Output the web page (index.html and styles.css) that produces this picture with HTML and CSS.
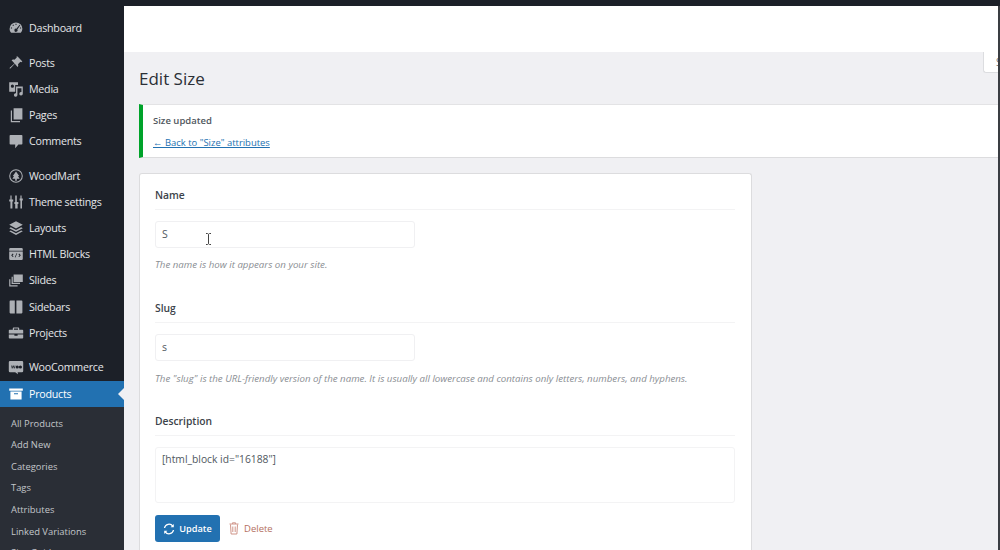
FILE: index.html
```html
<!DOCTYPE html>
<html lang="en">
<head>
<meta charset="utf-8">
<title>Edit Size</title>
<link rel="stylesheet" href="styles.css">
</head>
<body>
<div class="topbar"></div>
<div class="shell">
  <nav class="sidebar">
    <ul class="menu first">
      <li class="item"><svg class="ico" viewBox="0 0 20 20"><path d="M10 3a8 8 0 0 0-8 8c0 2 .7 3.800 2 5h12a8 8 0 0 0 2-5 8 8 0 0 0-8-8zM6.500 5.500l1 1-1 1-1-1zM10 4.300l1 .9-1 1-1-1zM4.300 9l1 1-1 1-1-1zM14.500 6l.8.6-3.600 5.200a2 2 0 1 1-1.200-.9zM15.700 9l1 1-1 1-1-1z" fill-rule="evenodd"/></svg><span>Dashboard</span></li>
    </ul>
    <ul class="menu">
      <li class="item"><svg class="ico" viewBox="0 0 20 20"><path d="M12 2l6 6-1.500 1-1-.5-3 3c.5 1.500.3 2.800-.5 3.500L8.500 11 3 17l-1-.2.200-1 6-5.300L4.500 6.500c.8-.8 2-1 3.500-.5l3-3-.5-1z"/></svg><span>Posts</span></li>
      <li class="item"><svg class="ico" viewBox="0 0 20 20"><path d="M1.500 1.500h11v3.500H9v8.500H1.500zM5.500 4.500a2 2 0 1 0 0 4 2 2 0 0 0 0-4z" fill-rule="evenodd"/><path d="M10 7h8.500v9a2.200 2.200 0 1 1-1.700-2.100V9h-5v8.500a2.200 2.200 0 1 1-1.800-2.200z"/></svg><span>Media</span></li>
      <li class="item"><svg class="ico" viewBox="0 0 20 20"><path d="M7 1.500h11v14H7zM5 4.500v13h10v1.500H3.500V4.500z"/></svg><span>Pages</span></li>
      <li class="item"><svg class="ico" viewBox="0 0 20 20"><path d="M3 2.500h14a1 1 0 0 1 1 1v10a1 1 0 0 1-1 1h-4l-4 4.500v-4.500H3a1 1 0 0 1-1-1v-10a1 1 0 0 1 1-1z"/></svg><span>Comments</span></li>
    </ul>
    <ul class="menu">
      <li class="item"><svg class="ico" viewBox="0 0 20 20"><path d="M10 1.500a8.500 8.500 0 1 0 0 17 8.500 8.500 0 0 0 0-17zm0 1.300a7.200 7.200 0 1 1 0 14.400 7.200 7.200 0 0 1 0-14.400zM10 4.500L6 10h1.500L5.500 13.500h3.500V16h2v-2.500h3.500L12.500 10H14z" fill-rule="evenodd"/></svg><span>WoodMart</span></li>
      <li class="item"><svg class="ico" viewBox="0 0 20 20"><path d="M3 2h1.500v5H6.500v2.500h-1V18H3V9.500H1.500V7H3zM9 2h2v8h2v2.500h-1V18H9v-5.500H8V10h1zM15.500 2H17v3.500h1.500V8h-1v10h-2V8h-1V5.500h1z"/></svg><span>Theme settings</span></li>
      <li class="item"><svg class="ico" viewBox="0 0 20 20"><path d="M10 1.500l8.500 4.500-8.500 4.500L1.500 6zM3.500 9l6.500 3.500L16.500 9l2 1.200-8.500 4.500-8.500-4.500zM3.500 13l6.500 3.500 6.500-3.500 2 1.200-8.500 4.500-8.500-4.500z"/></svg><span>Layouts</span></li>
      <li class="item"><svg class="ico" viewBox="0 0 20 20"><path d="M3 2.500h14a1.500 1.500 0 0 1 1.500 1.500v12a1.500 1.500 0 0 1-1.500 1.500H3A1.500 1.500 0 0 1 1.500 16V4A1.500 1.500 0 0 1 3 2.500zM1.500 6v.8h17V6zM6 9.500l1 .7L5.500 11.700 7 13l-1 .7L4 11.700zM14 9.500l2 2.200-2 2-1-.7 1.500-1.300-1.500-1.500zM10.700 9l.8.2L9.300 14.300l-.8-.2z" fill-rule="evenodd"/></svg><span>HTML Blocks</span></li>
      <li class="item"><svg class="ico" viewBox="0 0 20 20"><path d="M7 3h11.500v9.500H7zM4.500 6H6v7.500h9V15H4.500zM1.500 9H3v7.500h9V18H1.500z"/></svg><span>Slides</span></li>
      <li class="item"><svg class="ico" viewBox="0 0 20 20"><path d="M3 2h5.500v16H3a1 1 0 0 1-1-1V3a1 1 0 0 1 1-1zM10.500 2H17a1 1 0 0 1 1 1v14a1 1 0 0 1-1 1h-6.500z"/></svg><span>Sidebars</span></li>
      <li class="item"><svg class="ico" viewBox="0 0 20 20"><path d="M7 3h6a1 1 0 0 1 1 1v2h4a1 1 0 0 1 1 1v3.500H1V7a1 1 0 0 1 1-1h4V4a1 1 0 0 1 1-1zM7.500 4.500V6h5V4.500zM1 12h7v1.500h4V12h7v4a1 1 0 0 1-1 1H2a1 1 0 0 1-1-1z" fill-rule="evenodd"/></svg><span>Projects</span></li>
    </ul>
    <ul class="menu">
      <li class="item"><svg class="ico" viewBox="0 0 20 20"><path d="M2.500 2.500h15A1.500 1.500 0 0 1 19 4v11a1.500 1.500 0 0 1-1.500 1.500H12l.5 2.500L9 16.500H2.500A1.500 1.500 0 0 1 1 15V4a1.500 1.500 0 0 1 1.500-1.500zM4 8l.8 4h.8l.9-2.500.9 2.500h.8L9.300 8H8.400l-.5 2.500L7 8H6l-.9 2.500L4.800 8zM11.500 8a2 2 0 1 0 0 4 2 2 0 0 0 0-4zM15.500 8a2 2 0 1 0 0 4 2 2 0 0 0 0-4z" fill-rule="evenodd"/></svg><span>WooCommerce</span></li>
      <li class="item current"><svg class="ico" viewBox="0 0 20 20"><path d="M1.500 3h17v3h-17zM3 7h14v10H3zM7.500 9v1.200h5V9z" fill-rule="evenodd"/></svg><span>Products</span></li>
    </ul>
    <ul class="submenu">
      <li>All Products</li>
      <li>Add New</li>
      <li>Categories</li>
      <li>Tags</li>
      <li>Attributes</li>
      <li>Linked Variations</li>
      <li>Size Guides</li>
    </ul>
  </nav>
  <main class="main">
    <header class="whitebar"></header>
    <div class="screen-row"><div class="screen-tab">S</div></div>
    <h1 class="title">Edit Size</h1>
    <div class="notice">
      <p class="notice-text">Size updated</p>
      <a class="notice-link">← Back to "Size" attributes</a>
    </div>
    <form class="card">
      <div class="field">
        <h2 class="label">Name</h2>
        <div class="input"><span>S</span><svg class="cursor" viewBox="0 0 7 12"><path d="M1 .5h1.500l1 .8 1-.8H6M3.500 1.300v9.400M1 11.500h1.500l1-.8 1 .8H6" fill="none" stroke="#444" stroke-width="1"/></svg></div>
        <p class="hint">The name is how it appears on your site.</p>
      </div>
      <div class="field">
        <h2 class="label">Slug</h2>
        <div class="input"><span>s</span></div>
        <p class="hint hint-slug">The "slug" is the URL-friendly version of the name. It is usually all lowercase and contains only letters, numbers, and hyphens.</p>
      </div>
      <div class="field">
        <h2 class="label">Description</h2>
        <div class="textarea">[html_block id="16188"]</div>
      </div>
      <div class="actions">
        <button class="update" type="button"><svg class="btn-ico" viewBox="0 0 12 12"><path d="M1.500 5A4.600 4.600 0 0 1 9.800 3.200M10.500 7A4.600 4.600 0 0 1 2.200 8.800" fill="none" stroke="#fff" stroke-width="1.300"/><path d="M10.800 1v3.200H7.600zM1.200 11V7.800h3.200z" fill="#fff"/></svg><span>Update</span></button>
        <a class="delete"><svg class="del-ico" viewBox="0 0 10 13"><path d="M3.500 1.800V.8h3v1M.5 2h9M1.500 2.500l.6 9.500h5.800l.6-9.500M3.800 4.500v5.500M6.200 4.500v5.500" fill="none" stroke="#c9897c" stroke-width=".9"/></svg><span>Delete</span></a>
      </div>
    </form>
  </main>
</div>
</body>
</html>
```
FILE: styles.css
```css
* { box-sizing: border-box; }
html, body { margin: 0; padding: 0; width: 1000px; height: 550px; overflow: hidden; }
body { font-family: "Open Sans", "Noto Sans", sans-serif; background: #f0f0f3; display: flex; flex-direction: column; color: #3c434a; }
ul { list-style: none; margin: 0; padding: 0; }
h1, h2, p { margin: 0; }

.topbar { height: 6px; flex: none; background: #1c2028; }
.shell { flex: 1; display: flex; min-height: 0; border-right: 2px solid #3a3d42; }

.sidebar { width: 124px; flex: none; background: #1c2028; color: #e4e6e8; display: flex; flex-direction: column; overflow: hidden; }
.menu { margin-bottom: 8.600px; flex: none; }
.menu.first { margin-top: 9px; margin-bottom: 8.500px; }
.item { height: 26.15px; display: flex; align-items: center; font-size: 10.700px; letter-spacing: -.25px; position: relative; }
.ico { width: 16px; height: 16px; margin-left: 7.500px; margin-right: 5.500px; fill: #adb0b5; flex: none; }
.item.current { background: #2271b1; color: #fff; }
.item.current .ico { fill: #fff; }
.item.current::after { content: ""; position: absolute; right: 0; top: 7px; border: 6px solid transparent; border-right-color: #f0f0f3; border-left-width: 0; }
.menu:has(.current) { margin-bottom: 0; }

.submenu { background: #2a2e36; padding-top: 6px; color: #c3c6ca; flex: 1; }
.submenu li { height: 21.6px; line-height: 21.6px; font-size: 9.400px; padding-left: 11px; }

.main { flex: 1; min-width: 0; display: flex; flex-direction: column; position: relative; overflow: hidden; }
.whitebar { height: 46px; flex: none; background: #fff; }
.screen-row { position: absolute; top: 46px; right: 0; }
.screen-tab { width: 15px; height: 21px; background: #fff; border: 1px solid #dcdde0; border-top: 0; border-right: 0; border-bottom-left-radius: 3px; font-size: 10px; line-height: 20px; padding-left: 12px; color: #777; overflow: hidden; }

.title { font-size: 17px; font-weight: 400; line-height: 24px; color: #2b2f36; margin: 15px 0 13px 15px; flex: none; }

.notice { margin-left: 15px; height: 54px; background: #fff; border-left: 4px solid #00a32a; border-top: 1px solid #e3e3e5; border-bottom: 1px solid #dcdcde; padding: 8.500px 0 0 10px; flex: none; }
.notice-text { font-size: 9.500px; font-weight: 600; line-height: 13px; color: #50575e; }
.notice-link { display: block; margin-top: 9px; font-size: 9.450px; line-height: 13px; color: #2271b1; text-decoration: underline; }

.card { margin: 15px 0 0 15px; width: 613px; flex: 1; background: #fff; border: 1px solid #dcdcde; border-bottom: 0; border-radius: 3px 3px 0 0; padding: 14px 16px 0 15px; }
.label { font-size: 10.300px; font-weight: 600; line-height: 15px; color: #3c434a; padding-bottom: 6px; border-bottom: 1px solid #f3f3f4; }
.input { width: 260px; height: 27px; margin-top: 11px; border: 1px solid #f0f0f2; border-radius: 3px; font-size: 10.500px; line-height: 25px; padding-left: 6px; color: #50575e; position: relative; }
.cursor { position: absolute; left: 49px; top: 11px; width: 7px; height: 12px; }
.hint { margin-top: 10px; font-size: 9.700px; font-style: italic; line-height: 13px; color: #8a8e93; white-space: nowrap; margin-bottom: 30px; }
.hint-slug { margin-top: 11px; margin-bottom: 29px; }
.textarea { height: 56px; margin-top: 11px; border: 1px solid #f3f3f4; border-radius: 3px; font-size: 10.300px; line-height: 14px; padding: 4px 6px; color: #50575e; }
.actions { display: flex; align-items: center; margin-top: 12px; }
.update { display: flex; align-items: center; justify-content: center; gap: 4px; width: 65px; height: 27px; background: #2271b1; border: 0; border-radius: 3px; color: #fff; font: 600 9.200px "Open Sans", sans-serif; padding: 0; }
.btn-ico { width: 12px; height: 12px; }
.delete { display: flex; align-items: center; gap: 5px; margin-left: 9px; font-size: 9.500px; color: #b4705f; }
.del-ico { width: 10px; height: 13px; }
```
